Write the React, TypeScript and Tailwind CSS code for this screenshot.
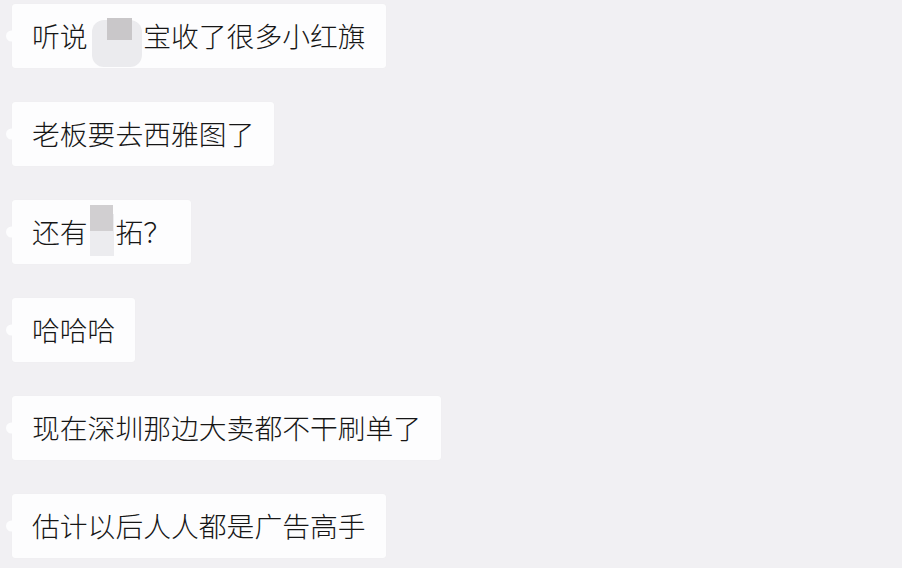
import React from "react";

const font = { fontFamily: '"Noto Sans CJK SC", "Noto Sans", sans-serif' };

function Bubble({ children, className = "" }: { children: React.ReactNode; className?: string }) {
  return (
    <div className="relative flex">
      <div className={`relative h-[64px] flex items-center bg-[#fdfdfe] rounded-[3px] pl-[20px] pr-[20px] text-[27.8px] leading-none font-light text-[#161616] shadow-[0_0_1px_rgba(0,0,0,0.06)] ${className}`}>
        <span className="absolute left-[-6px] top-1/2 -translate-y-1/2 w-[11px] h-[11px] rounded-full bg-[#fdfdfe]" />
        <span className="relative whitespace-nowrap">{children}</span>
      </div>
    </div>
  );
}

export default function App() {
  return (
    <div className="w-[902px] h-[568px] bg-[#f1f0f3] overflow-hidden" style={font}>
      <div className="flex flex-col gap-[34px] pt-[4px] pl-[12px]">
        <Bubble>
          听说
          <span className="relative inline-block">
            <span className="text-transparent">淘淘</span>
            <span className="absolute left-[4px] top-[-2px] w-[50px] h-[47px] rounded-[12px] bg-[#ebebee]" />
            <span className="absolute left-[19px] top-[-4px] w-[25px] h-[22px] bg-[#c9c7c9]" />
          </span>
          宝收了很多小红旗
        </Bubble>
        <Bubble>老板要去西雅图了</Bubble>
        <Bubble>
          还有
          <span className="relative inline-block">
            <span className="text-transparent">开</span>
            <span className="absolute left-[2px] top-[-4px] w-[24px] h-[42px] bg-[#ececef]" />
            <span className="absolute left-[2px] top-[-13px] w-[23px] h-[26px] bg-[#d1cfd1]" />
          </span>
          拓？
        </Bubble>
        <Bubble>哈哈哈</Bubble>
        <Bubble>现在深圳那边大卖都不干刷单了</Bubble>
        <Bubble>估计以后人人都是广告高手</Bubble>
      </div>
    </div>
  );
}
